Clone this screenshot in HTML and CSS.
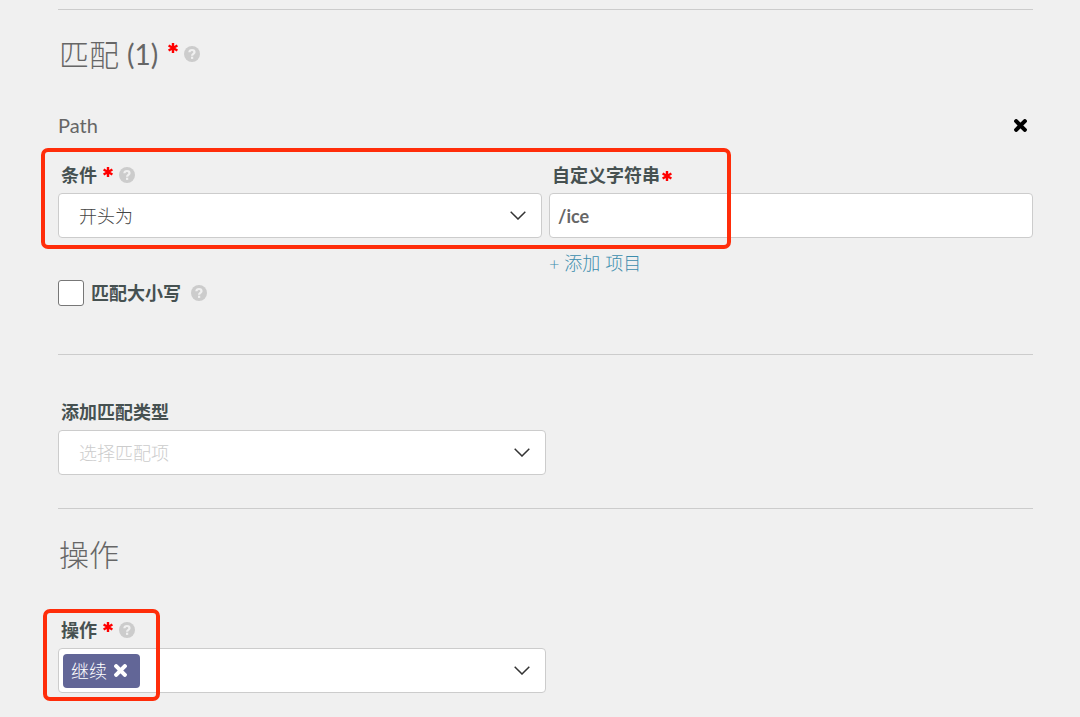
FILE: index.html
```html
<!DOCTYPE html>
<html lang="zh-CN">
<head>
  <meta charset="UTF-8" />
  <meta name="viewport" content="width=device-width, initial-scale=1.0"/>
  <title>匹配</title>
  <link rel="stylesheet" href="styles.css">
</head>
<body>
  <!-- shared icons -->
  <svg class="sprite" aria-hidden="true">
    <symbol id="star" viewBox="0 0 10 10">
      <path d="M5 0v10M.6 2.5l8.8 5M9.4 2.5l-8.8 5" stroke="currentColor" stroke-width="2.4" fill="none"/>
    </symbol>
    <symbol id="help" viewBox="0 0 16 16">
      <circle cx="8" cy="8" r="8" fill="#ccc"/>
      <path d="M5.4 6.3C5.5 4.7 6.6 4 8 4s2.500.8 2.500 2.200C10.500 7.900 8.100 7.700 8.100 9.700" stroke="#f0f0f0" stroke-width="2.200" fill="none"/>
      <path d="M7 10.700h2.200v2.200H7z" fill="#f0f0f0"/>
    </symbol>
    <symbol id="cross" viewBox="0 0 12 12">
      <path d="M2 2l8 8M10 2l-8 8" stroke="currentColor" stroke-width="3.800" stroke-linecap="round" fill="none"/>
    </symbol>
  </svg>

  <form>
    <section class="match">
      <h2>匹配 <span class="count">(1)</span> <svg class="star"><use href="#star"/></svg><svg class="help"><use href="#help"/></svg></h2>

      <div class="match-head">
        <h3>Path</h3>
        <button type="button" class="remove" aria-label="删除"><svg><use href="#cross"/></svg></button>
      </div>

      <div class="match-row">
        <div class="field">
          <label for="condition">条件 <svg class="star"><use href="#star"/></svg><svg class="help"><use href="#help"/></svg></label>
          <select id="condition">
            <option>开头为</option>
          </select>
        </div>
        <div class="field">
          <label for="value">自定义字符串<svg class="star star-tight"><use href="#star"/></svg></label>
          <input id="value" type="text" value="/ice" />
          <a href="#" class="add">+ 添加 项目</a>
        </div>
        <div class="highlight highlight-path"></div>
      </div>

      <div class="check">
        <input id="case" type="checkbox" />
        <label for="case">匹配大小写 <svg class="help help-wide"><use href="#help"/></svg></label>
      </div>
    </section>

    <section class="add-match">
      <div class="field half">
        <label for="match-type">添加匹配类型</label>
        <select id="match-type" class="empty">
          <option>选择匹配项</option>
        </select>
      </div>
    </section>

    <section class="action">
      <h2>操作</h2>
      <div class="field half">
        <label for="action">操作 <svg class="star"><use href="#star"/></svg><svg class="help"><use href="#help"/></svg></label>
        <div class="tags">
          <span class="tag">继续 <button type="button" aria-label="移除"><svg><use href="#cross"/></svg></button></span>
          <select id="action">
            <option></option>
          </select>
        </div>
        <div class="highlight highlight-action"></div>
      </div>
    </section>
  </form>
</body>
</html>
```
FILE: styles.css
```css
* {
  box-sizing: border-box;
}

body {
  margin: 0;
  padding: 9px 47px 24px 58px;
  font-family: Lato, "Noto Sans CJK SC", sans-serif;
  font-size: 18px;
  line-height: 24px;
  background: #f0f0f0;
  color: #666;
}

.sprite {
  display: none;
}

section {
  border-top: 1px solid #ccc;
}

h2 {
  display: flex;
  align-items: center;
  margin: 0;
  padding-left: 1px;
  font-size: 30px;
  font-weight: 300;
  line-height: 40px;
}

h3 {
  margin: 0;
  font-size: 20px;
  font-weight: 400;
}

.count {
  margin-left: 8px;
  font-size: 28px;
  font-weight: 400;
}

.match {
  padding: 24px 0 48px;
}

.match-head {
  display: flex;
  justify-content: space-between;
  align-items: center;
  margin: 39px 0 26px;
}

.remove {
  display: flex;
  padding: 0 6px;
  border: none;
  background: none;
  color: #000;
  cursor: pointer;
}

.remove svg,
.tag svg {
  width: 13px;
  height: 13px;
}

.match-row {
  position: relative;
  display: grid;
  grid-template-columns: 1fr 1fr;
  gap: 7px;
}

.field {
  position: relative;
}

.field label,
.check label {
  display: flex;
  align-items: center;
  color: #465151;
  font-weight: 700;
}

.field label {
  margin: 0 0 6px 3px;
}

.star {
  width: 10px;
  height: 10px;
  margin: 0 6px 6px 6px;
  color: #f00;
}

.star-tight {
  margin: 2px 0 0 2px;
}

h2 .star {
  margin: 0 6px 12px 10px;
}

.help {
  width: 16px;
  height: 16px;
}

.help-wide {
  margin-left: 10px;
}

.field > select,
.field > input,
.tags {
  width: 100%;
  height: 45px;
  border: 1px solid #ccc;
  border-radius: 4px;
  background-color: #fff;
}

select {
  appearance: none;
  padding: 0 20px;
  font: inherit;
  font-weight: 300;
  color: #444;
  background: url("data:image/svg+xml,%3Csvg xmlns='http://www.w3.org/2000/svg' width='16' height='9'%3E%3Cpath d='M.7.7L8 8 15.300.7' fill='none' stroke='%23333' stroke-width='1.500'/%3E%3C/svg%3E") no-repeat right 15px center;
}

.empty {
  color: #ccc;
}

.field > input {
  display: block;
  padding: 0 8px;
  font: inherit;
  font-weight: 700;
  color: #666;
}

.add {
  display: block;
  width: max-content;
  margin-top: 13px;
  color: #3c8dad;
  font-weight: 300;
  text-decoration: none;
}

.check {
  display: flex;
  align-items: center;
  margin-top: 5px;
}

.check input {
  appearance: none;
  width: 26px;
  height: 26px;
  margin: 0 7px 0 0;
  border: 1px solid #777;
  border-radius: 3px;
  background: #fff;
}

.half {
  width: 50%;
}

.add-match {
  padding: 45px 0 33px;
}

.action {
  padding-top: 25px;
}

.action h2 {
  margin-bottom: 44px;
}

.tags {
  display: flex;
  align-items: center;
  padding-left: 4px;
}

.tags select {
  flex: 1;
  height: 100%;
  border: none;
}

.tag {
  display: flex;
  align-items: center;
  gap: 7px;
  height: 34px;
  padding: 0 13px 0 8px;
  border-radius: 4px;
  background: #626697;
  color: #fff;
  font-weight: 300;
}

.tag button {
  display: flex;
  padding: 0;
  border: none;
  background: none;
  color: #fff;
  cursor: pointer;
}

/* red callout frames over the form */
.highlight {
  position: absolute;
  border: 4px solid #ff2d0a;
  border-radius: 7px;
  pointer-events: none;
}

.highlight-path {
  top: -15px;
  left: -17px;
  width: 690px;
  height: 101px;
}

.highlight-action {
  top: -9px;
  left: -15px;
  width: 117px;
  height: 92px;
}
```
